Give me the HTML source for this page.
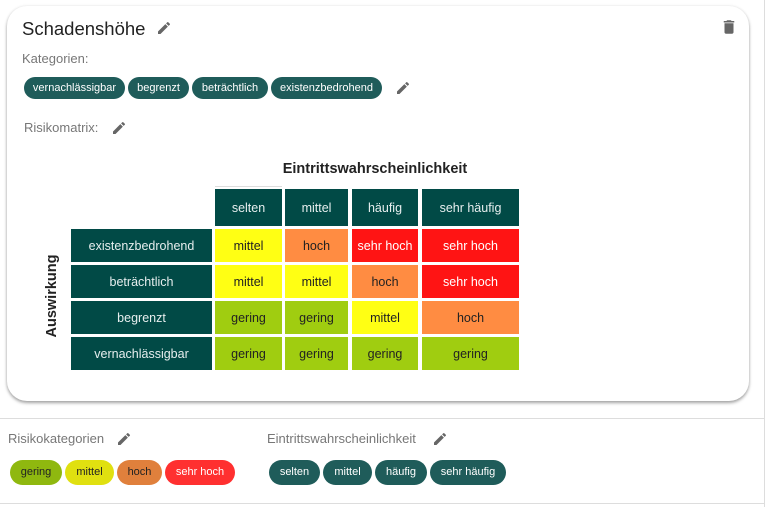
<!DOCTYPE html><html><head><meta charset="utf-8"><style>
body{margin:0;width:767px;height:507px;background:#fff;font-family:"Liberation Sans",sans-serif;position:relative;overflow:hidden}
.a{position:absolute}
.card{left:7px;top:6px;width:742px;height:395px;border-radius:20px;background:#fff;box-shadow:0 2px 3px rgba(0,0,0,.35),0 0 3px rgba(0,0,0,.08)}
.chip{position:absolute;height:22px;line-height:22px;border-radius:11px;background:#1f5c5a;color:#fff;font-size:11px;text-align:center}
.bc{height:25px;line-height:25px;border-radius:13px;font-size:11px}
.cell{position:absolute;display:flex;align-items:center;justify-content:center;font-size:12.5px}
.h{background:#014a46;color:#e6eeee}
.y{background:#ffff14;color:#222}.o{background:#ff8c42;color:#222}.r{background:#ff1414;color:#fff}.g{background:#a0cd10;color:#222}
.lbl{color:#777;font-size:13px}
</style></head><body>
<svg width="0" height="0" style="position:absolute"><defs><path id="pen" d="M3 17.25V21h3.75L17.81 9.94l-3.75-3.75L3 17.25zM20.71 7.04a1 1 0 000-1.41l-2.34-2.34a1 1 0 00-1.41 0l-1.83 1.83 3.75 3.75 1.83-1.83z"/></defs></svg>
<div class="a card"></div>
<div class="a" style="left:764px;top:0;width:1px;height:507px;background:#ddd"></div>
<div class="a" style="left:22px;top:18px;font-size:18.5px;color:#222">Schadenshöhe</div>
<svg class="a" style="left:156px;top:20px" width="16" height="16" viewBox="0 0 24 24" fill="#666"><use href="#pen"/></svg>
<svg class="a" style="left:720px;top:18px" width="18" height="18" viewBox="0 0 24 24" fill="#666"><path d="M6 19c0 1.1.9 2 2 2h8c1.1 0 2-.9 2-2V7H6v12zM19 4h-3.5l-1-1h-5l-1 1H5v2h14V4z"/></svg>
<div class="a lbl" style="left:22px;top:51px">Kategorien:</div>
<div class="chip" style="left:24px;top:77px;width:101px">vernachlässigbar</div>
<div class="chip" style="left:128px;top:77px;width:61px">begrenzt</div>
<div class="chip" style="left:192px;top:77px;width:76px">beträchtlich</div>
<div class="chip" style="left:271px;top:77px;width:111px">existenzbedrohend</div>
<svg class="a" style="left:395px;top:80px" width="16" height="16" viewBox="0 0 24 24" fill="#666"><use href="#pen"/></svg>
<div class="a lbl" style="left:24px;top:120px">Risikomatrix:</div>
<svg class="a" style="left:111px;top:120px" width="16" height="16" viewBox="0 0 24 24" fill="#666"><use href="#pen"/></svg>
<div class="a" style="left:215px;top:161px;width:320px;text-align:center;font-size:14.5px;font-weight:bold;color:#222">Eintrittswahrscheinlichkeit</div>
<div class="a" style="left:215px;top:186px;width:67px;height:1px;background:#ddd"></div>
<div class="a" style="left:2px;top:288px;width:100px;text-align:center;transform:rotate(-90deg);font-size:14.5px;font-weight:bold;color:#222">Auswirkung</div>
<div class="cell h" style="left:215px;top:189px;width:67px;height:37px">selten</div>
<div class="cell h" style="left:285px;top:189px;width:63px;height:37px">mittel</div>
<div class="cell h" style="left:352px;top:189px;width:66px;height:37px">häufig</div>
<div class="cell h" style="left:422px;top:189px;width:97px;height:37px">sehr häufig</div>
<div class="cell h" style="left:71px;top:229px;width:141px;height:33px">existenzbedrohend</div>
<div class="cell h" style="left:71px;top:265px;width:141px;height:33px">beträchtlich</div>
<div class="cell h" style="left:71px;top:301px;width:141px;height:33px">begrenzt</div>
<div class="cell h" style="left:71px;top:337px;width:141px;height:33px">vernachlässigbar</div>
<div class="cell y" style="left:215px;top:229px;width:67px;height:33px">mittel</div>
<div class="cell o" style="left:285px;top:229px;width:63px;height:33px">hoch</div>
<div class="cell r" style="left:352px;top:229px;width:66px;height:33px">sehr hoch</div>
<div class="cell r" style="left:422px;top:229px;width:97px;height:33px">sehr hoch</div>
<div class="cell y" style="left:215px;top:265px;width:67px;height:33px">mittel</div>
<div class="cell y" style="left:285px;top:265px;width:63px;height:33px">mittel</div>
<div class="cell o" style="left:352px;top:265px;width:66px;height:33px">hoch</div>
<div class="cell r" style="left:422px;top:265px;width:97px;height:33px">sehr hoch</div>
<div class="cell g" style="left:215px;top:301px;width:67px;height:33px">gering</div>
<div class="cell g" style="left:285px;top:301px;width:63px;height:33px">gering</div>
<div class="cell y" style="left:352px;top:301px;width:66px;height:33px">mittel</div>
<div class="cell o" style="left:422px;top:301px;width:97px;height:33px">hoch</div>
<div class="cell g" style="left:215px;top:337px;width:67px;height:33px">gering</div>
<div class="cell g" style="left:285px;top:337px;width:63px;height:33px">gering</div>
<div class="cell g" style="left:352px;top:337px;width:66px;height:33px">gering</div>
<div class="cell g" style="left:422px;top:337px;width:97px;height:33px">gering</div>
<div class="a" style="left:0;top:418px;width:764px;height:1px;background:#ddd"></div>
<div class="a" style="left:0;top:503px;width:764px;height:1px;background:#ddd"></div>
<div class="a lbl" style="left:8px;top:431px">Risikokategorien</div>
<svg class="a" style="left:116px;top:431px" width="16" height="16" viewBox="0 0 24 24" fill="#666"><use href="#pen"/></svg>
<div class="a lbl" style="left:267px;top:431px">Eintrittswahrscheinlichkeit</div>
<svg class="a" style="left:432px;top:431px" width="16" height="16" viewBox="0 0 24 24" fill="#666"><use href="#pen"/></svg>
<div class="chip bc" style="left:10px;top:460px;width:52px;background:#8fb80f;color:#222">gering</div>
<div class="chip bc" style="left:65px;top:460px;width:49px;background:#e0e010;color:#222">mittel</div>
<div class="chip bc" style="left:117px;top:460px;width:45px;background:#e0803c;color:#222">hoch</div>
<div class="chip bc" style="left:165px;top:460px;width:70px;background:#ff3030">sehr hoch</div>
<div class="chip bc" style="left:269px;top:460px;width:51px">selten</div>
<div class="chip bc" style="left:323px;top:460px;width:49px">mittel</div>
<div class="chip bc" style="left:375px;top:460px;width:52px">häufig</div>
<div class="chip bc" style="left:430px;top:460px;width:76px">sehr häufig</div>
</body></html>
